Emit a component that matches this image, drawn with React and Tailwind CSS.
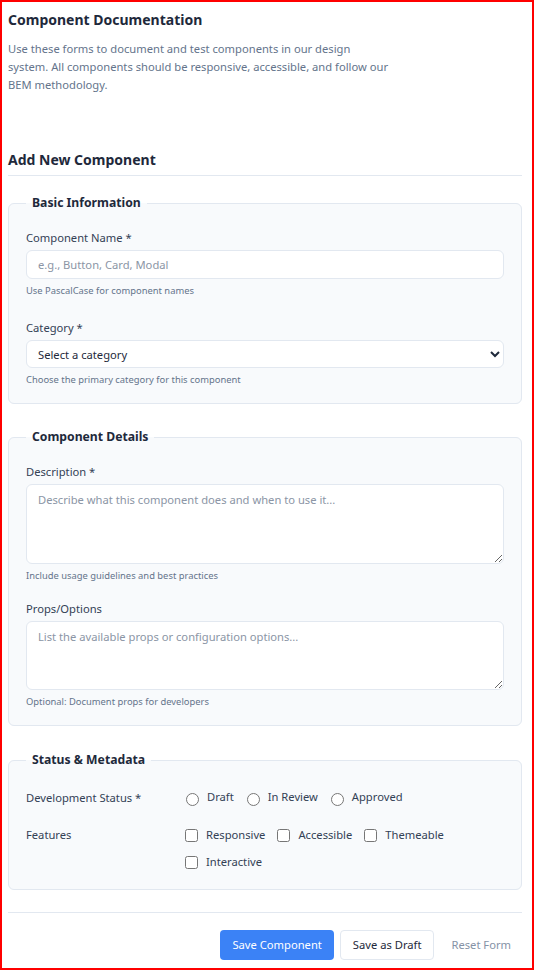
import React from 'react';

function Field({ label, help, className = '', children }) {
    return (
        <div className={className}>
            <label className="block text-[11.2px] leading-[18px] text-[#334155] mb-[3px]">{label}</label>
            {children}
            <p className="mt-[5px] text-[9.4px] leading-[14px] text-[#64748b]">{help}</p>
        </div>
    );
}

function Section({ title, className = '', children }) {
    return (
        <fieldset className={`rounded-md border border-[#e2e8f0] bg-[#f8fafc] px-[17px] pt-[17px] ${className}`}>
            <legend className="px-[6px] text-[12.2px] leading-[18px] font-bold text-[#1e293b]">{title}</legend>
            {children}
        </fieldset>
    );
}

export default function App() {
    return (
        <div className="w-[534px] h-[970px] overflow-hidden border-2 border-[#ff0000] bg-white pl-[6px] pr-[10px] pt-[7px] font-['Noto_Sans',sans-serif]">
            <h1 className="text-[14px] leading-[22px] font-bold text-[#1e293b]">Component Documentation</h1>
            <p className="mt-[9px] w-[384px] text-[11.2px] leading-[18px] text-[#64748b]">
                Use these forms to document and test components in our design system. All components should be responsive, accessible, and follow our BEM methodology.
            </p>

            <h2 className="mt-[55px] border-b border-[#e2e8f0] pb-[4px] text-[14px] leading-[22px] font-bold text-[#1e293b]">Add New Component</h2>

            <Section title="Basic Information" className="mt-[18px] pb-[16px]">
                <Field label="Component Name *" help="Use PascalCase for component names">
                    <input
                        type="text"
                        placeholder="e.g., Button, Card, Modal"
                        className="block w-full h-[29px] rounded-md border border-[#e2e8f0] bg-white px-[11px] text-[11.2px] text-[#1e293b] placeholder:text-[#8b95a5] outline-none"
                    />
                </Field>
                <Field label="Category *" help="Choose the primary category for this component" className="mt-[21px]">
                    <select className="block w-full h-[28px] rounded-md border border-[#e2e8f0] bg-white pl-[7px] pr-[2px] text-[11.2px] text-[#1e293b] outline-none">
                        <option>Select a category</option>
                        <option>Layout</option>
                        <option>Form</option>
                        <option>Navigation</option>
                    </select>
                </Field>
            </Section>

            <Section title="Component Details" className="mt-[24px] pb-[16px]">
                <Field label="Description *" help="Include usage guidelines and best practices">
                    <textarea
                        placeholder="Describe what this component does and when to use it..."
                        className="block w-full h-[80px] rounded-md border border-[#e2e8f0] bg-white px-[11px] py-[6px] text-[11.2px] leading-[18px] text-[#1e293b] placeholder:text-[#8b95a5] outline-none"
                    />
                </Field>
                <Field label="Props/Options" help="Optional: Document props for developers" className="mt-[17px]">
                    <textarea
                        placeholder="List the available props or configuration options..."
                        className="block w-full h-[69px] rounded-md border border-[#e2e8f0] bg-white px-[11px] py-[6px] text-[11.2px] leading-[18px] text-[#1e293b] placeholder:text-[#8b95a5] outline-none"
                    />
                </Field>
            </Section>

            <Section title="Status & Metadata" className="mt-[25px] pb-[18px]">
                <div className="flex items-center pt-[3px] text-[11.2px] leading-[18px] text-[#334155]">
                    <span className="w-[160px] shrink-0">Development Status *</span>
                    <div className="flex items-center">
                        {['Draft', 'In Review', 'Approved'].map((s) => (
                            <label key={s} className="flex items-center mr-[13px]">
                                <input type="radio" name="status" className="w-[13px] h-[13px] mt-[3px]" />
                                <span className="ml-[8px] -mt-[2px]">{s}</span>
                            </label>
                        ))}
                    </div>
                </div>
                <div className="mt-[19px] flex items-start text-[11.2px] leading-[18px] text-[#334155]">
                    <span className="w-[159px] shrink-0">Features</span>
                    <div className="flex flex-wrap gap-y-[9px] w-[300px]">
                        {['Responsive', 'Accessible', 'Themeable', 'Interactive'].map((f) => (
                            <label key={f} className="flex items-center mr-[12px]">
                                <input type="checkbox" className="w-[13px] h-[13px]" />
                                <span className="ml-[8px]">{f}</span>
                            </label>
                        ))}
                    </div>
                </div>
            </Section>

            <div className="mt-[22px] border-t border-[#e2e8f0] pt-[17px] flex justify-end gap-[6px]">
                <button className="h-[30px] rounded-[4px] bg-[#3b82f6] px-[12px] text-[11.2px] text-white">Save Component</button>
                <button className="h-[30px] rounded-[4px] border border-[#e2e8f0] bg-white px-[12px] text-[11.2px] text-[#1e293b]">Save as Draft</button>
                <button className="h-[30px] px-[11px] text-[11.2px] text-[#8592a6]">Reset Form</button>
            </div>
        </div>
    );
}
